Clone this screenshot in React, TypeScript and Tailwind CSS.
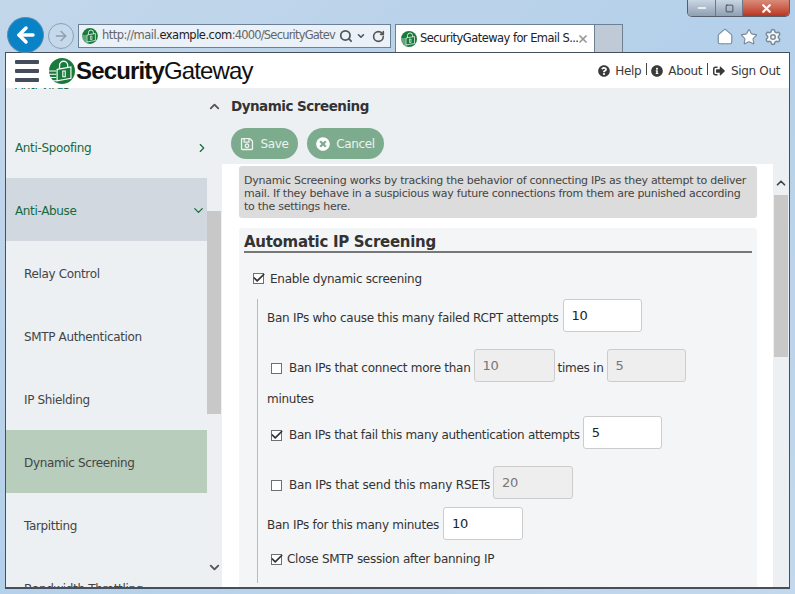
import { ArrowLeft, ArrowRight, ChevronDown, ChevronRight, ChevronUp, Home, RotateCw, Search, Settings, Star, X, Minus, Square, Check } from 'lucide-react';
import { FaInfoCircle, FaQuestionCircle, FaRegSave, FaSignOutAlt, FaTimesCircle } from 'react-icons/fa';
import type { ReactNode } from 'react';

const tahoma = "font-['DejaVu_Sans',sans-serif]";

function Logo({ size }: { size: number }) {
    return (
        <svg width={size} height={size} viewBox="0 0 32 32">
            <circle cx="16" cy="16" r="16" fill="#1a7a3c" />
            <path d="M13 13 V9 a5 5 0 0 1 10 0 V12" fill="none" stroke="#fff" strokeWidth="1.6" />
            <path d="M10 14 L27 11 V25 L10 28 Z" fill="#1a7a3c" stroke="#fff" strokeWidth="1.4" />
            <path d="M17 16 h3 v7 h-3 z" fill="none" stroke="#fff" strokeWidth="1.3" />
            <path d="M0 16 H9 M0 20 H9 M2 24 H9 M5 28 H11" stroke="#fff" strokeWidth="1.3" />
        </svg>
    );
}

function Box({ checked, className = '' }: { checked?: boolean; className?: string }) {
    return (
        <span className={`relative inline-block w-[11px] h-[11px] shrink-0 bg-white border border-[#707070] ${className}`}>
            {checked && <Check size={14} strokeWidth={3} className="absolute left-[-2px] top-[-3px] text-[#333]" />}
        </span>
    );
}

function Field({ value, width, disabled }: { value: string; width: string; disabled?: boolean }) {
    return (
        <span className={`inline-flex items-center h-[33px] pl-2 rounded-[3px] border border-[#ccc] text-[13px] ${width} ${disabled ? 'bg-[#eee] text-[#777]' : 'bg-white text-[#222]'}`}>
            {value}
        </span>
    );
}

// labels sit a little lower than the inputs beside them
function Label({ children, className = '' }: { children: ReactNode; className?: string }) {
    return <span className={`flex items-center whitespace-nowrap pt-[5px] ${className}`}>{children}</span>;
}

const navItems = [
    { label: 'Anti-Virus', cls: 'pl-[9px] text-[#166a3c]' },
    { label: 'Anti-Spoofing', cls: 'pl-[9px] text-[#166a3c]', icon: 'right' },
    { label: 'Anti-Abuse', cls: 'pl-[9px] text-[#166a3c] bg-[#d1d8df]', icon: 'down' },
    { label: 'Relay Control', cls: 'pl-[18px] text-[#444]' },
    { label: 'SMTP Authentication', cls: 'pl-[18px] text-[#444]' },
    { label: 'IP Shielding', cls: 'pl-[18px] text-[#444]' },
    { label: 'Dynamic Screening', cls: 'pl-[18px] text-[#444] bg-[#b8cdbc]' },
    { label: 'Tarpitting', cls: 'pl-[18px] text-[#444]' },
    { label: 'Bandwidth Throttling', cls: 'pl-[18px] text-[#444]' },
];

export default function App() {
    return (
        <div className={`relative w-[795px] h-[594px] overflow-hidden flex flex-col bg-gradient-to-br from-[#c3d7ea] via-[#b4d0ea] to-[#c2d8ec] text-[12px] tracking-[-0.35px] ${tahoma}`}>
            {/* Window buttons */}
            <div className="absolute top-0 left-[687px] w-[103px] h-[17px] flex rounded-b-[5px] border border-t-0 border-[#555e6b] overflow-hidden">
                <div className="w-[28px] flex items-center justify-center bg-gradient-to-b from-[#c9d6e3] to-[#8fa0b3] border-r border-[#6c7886]">
                    <Minus size={12} strokeWidth={3} className="text-white" />
                </div>
                <div className="w-[27px] flex items-center justify-center bg-gradient-to-b from-[#c9d6e3] to-[#8fa0b3] border-r border-[#6c7886]">
                    <Square size={9} strokeWidth={2} className="text-[#333]" />
                </div>
                <div className="flex-1 flex items-center justify-center bg-gradient-to-b from-[#d98a78] to-[#b9331f]">
                    <X size={13} strokeWidth={4} className="text-white" />
                </div>
            </div>

            {/* Browser chrome */}
            <div className="h-[52px] shrink-0 flex items-end pl-[7px] pr-[13px]">
                <div className="w-[37px] h-[36px] mb-[-1px] z-10 rounded-full bg-[#0a83c6] border border-[#5b8db0] flex items-center justify-center">
                    <ArrowLeft size={24} strokeWidth={3.5} className="text-white" />
                </div>
                <div className="w-[26px] h-[26px] ml-[4px] mb-[3px] rounded-full border border-[#8aa0b8] bg-[#c6d9ea] flex items-center justify-center">
                    <ArrowRight size={16} className="text-[#8b9cad]" />
                </div>
                <div className="w-[313px] h-[24px] ml-[4px] mb-[4px] flex items-center pl-[3px] pr-[5px] bg-[#eaf1f8] border border-[#6d8196] text-[11.5px] tracking-[-0.5px] text-[#666]">
                    <Logo size={16} />
                    <span className="ml-[4px] w-[235px] whitespace-nowrap">http://mail.<span className="text-[#222]">example.com</span><span className="tracking-[-0.8px]">:4000/SecurityGatev</span></span>
                    <Search size={14} strokeWidth={3} className="ml-[4px] text-[#555]" />
                    <ChevronDown size={10} strokeWidth={4} className="ml-[3px] text-[#555]" />
                    <RotateCw size={13} strokeWidth={3} className="ml-[6px] text-[#555]" />
                </div>
                <div className="w-[200px] h-[28px] ml-[4px] flex items-center pl-[5px] bg-white border border-b-0 border-[#6d8196] text-[11.5px] tracking-[-0.55px] text-[#222]">
                    <Logo size={16} />
                    <span className="ml-[3px] w-[157px] whitespace-nowrap">SecurityGateway for Email S...</span>
                    <X size={12} strokeWidth={3.5} className="text-[#999]" />
                </div>
                <div className="w-[28px] h-[28px] bg-[#bfcad6] border border-l-0 border-b-0 border-[#6d8196]" />
                <div className="ml-auto flex gap-[6px] mb-[6px]">
                    <Home size={18} strokeWidth={1.5} className="text-[#7a8a9a] fill-white" />
                    <Star size={18} strokeWidth={1.5} className="text-[#7a8a9a] fill-white" />
                    <Settings size={18} strokeWidth={2} className="text-[#7a8a9a] fill-[#f4f7fa]" />
                </div>
            </div>

            {/* Page */}
            <div className="mx-[5px] w-[785px] h-[537px] shrink-0 flex flex-col overflow-hidden bg-[#ecf0f3] border border-b-2 border-[#46505c]">
                <header className="h-[35px] shrink-0 z-10 flex items-center bg-white pl-[9px] pr-[9px]">
                    <div className="w-[24px] flex flex-col gap-[5px]">
                        <div className="h-[4px] bg-[#454d5c] rounded-[1px]" />
                        <div className="h-[4px] bg-[#454d5c] rounded-[1px]" />
                        <div className="h-[4px] bg-[#454d5c] rounded-[1px]" />
                    </div>
                    <div className="ml-[10px]"><Logo size={26} /></div>
                    <div className="ml-px font-['Liberation_Sans',sans-serif] text-[24px] tracking-[-0.85px] text-[#111]">
                        <span className="font-bold">Security</span>Gateway
                    </div>
                    <div className="ml-auto flex items-center text-[12px] text-[#3a3a3a]">
                        <FaQuestionCircle size={12} className="mr-[5px]" />Help
                        <span className="ml-[5px] mr-[4px] mb-[3px] h-[12px] w-px bg-[#444]" />
                        <FaInfoCircle size={12} className="mr-[5px]" />About
                        <span className="mx-[5px] mb-[3px] h-[12px] w-px bg-[#444]" />
                        <FaSignOutAlt size={12} className="mr-[6px]" />Sign Out
                    </div>
                </header>

                <div className="flex-1 min-h-0 flex">
                    {/* Sidebar */}
                    <nav className="w-[201px] shrink-0 overflow-hidden">
                        <div className="mt-[-36px]">
                            {navItems.map((item) => (
                                <div key={item.label} className={`h-[63px] pt-[2px] flex items-center justify-between pr-[2px] text-[12px] ${item.cls}`}>
                                    {item.label}
                                    {item.icon === 'right' && <ChevronRight size={14} strokeWidth={2} className="mr-[-4px] text-[#166a3c]" />}
                                    {item.icon === 'down' && <ChevronDown size={15} strokeWidth={2} className="mr-[-1px] text-[#166a3c]" />}
                                </div>
                            ))}
                        </div>
                    </nav>
                    <div className="w-[14px] shrink-0 flex flex-col items-center pt-[11px] pb-[12px]">
                        <ChevronUp size={15} strokeWidth={3} className="text-[#555]" />
                        <div className="mt-[97px] h-[203px] w-full bg-[#c8c8c8]" />
                        <ChevronDown size={15} strokeWidth={3} className="mt-auto text-[#555]" />
                    </div>

                    {/* Main */}
                    <main className="flex-1 min-w-0 flex flex-col">
                        <div className="pt-[8px] pl-[10px] text-[13.5px] tracking-[-0.5px] font-bold leading-[20px] text-[#333]">Dynamic Screening</div>
                        <div className="flex gap-[9px] pl-[10px] pt-[12px]">
                            <button className="h-[31px] w-[67px] flex items-center justify-center gap-[6px] rounded-full bg-[#7dab8d] text-[#edf3ee] text-[12px]">
                                <FaRegSave size={14} />Save
                            </button>
                            <button className="h-[31px] w-[77px] flex items-center justify-center gap-[6px] rounded-full bg-[#7dab8d] text-[#edf3ee] text-[12px]">
                                <FaTimesCircle size={14} className="text-white" />Cancel
                            </button>
                        </div>
                        <div className="flex-1 min-h-0 mt-[5px] flex overflow-hidden">
                            <div className="w-[551px] ml-px shrink-0 bg-white pl-[17px] pr-[16px] pt-[2px]">
                                <div className="h-[52px] px-[5px] pt-[8px] rounded-[3px] bg-[#dcdcdc] text-[11px] tracking-[-0.26px] leading-[13px] text-[#444]">
                                    Dynamic Screening works by tracking the behavior of connecting IPs as they attempt to deliver mail. If they behave in a suspicious way future connections from them are punished according to the settings here.
                                </div>
                                <section className="h-[400px] mt-[10px] pt-[3px] px-[5px] rounded-[3px] bg-[#f4f5f7] text-[#333] tracking-[-0.27px]">
                                    <h2 className="h-[22px] pt-px text-[15px] leading-[20px] font-bold border-b-2 border-[#777] tracking-[-0.3px]">Automatic IP Screening</h2>
                                    <div className="h-[41px] flex items-center gap-[6px] pl-[9px] pt-[10px]">
                                        <Box checked />Enable dynamic screening
                                    </div>
                                    <div className="ml-[13px] pl-[9px] h-[284px] border-l border-[#bbb]">
                                        <div className="flex items-center gap-[4px] h-[33px] mt-[5px]">
                                            <Label>Ban IPs who cause this many failed RCPT attempts</Label>
                                            <Field value="10" width="w-[79px]" />
                                        </div>
                                        <div className="flex items-center gap-[3px] h-[33px] mt-[17px]">
                                            <Label><Box className="ml-[4px] mr-[7px]" />Ban IPs that connect more than</Label>
                                            <Field value="10" width="w-[81px]" disabled />
                                            <Label>times in</Label>
                                            <Field value="5" width="w-[79px]" disabled />
                                        </div>
                                        <div className="h-[16px] mt-[9px] leading-[16px]">minutes</div>
                                        <div className="flex items-center gap-[3px] h-[33px] mt-[9px]">
                                            <Label className="tracking-[-0.31px]"><Box checked className="ml-[4px] mr-[7px]" />Ban IPs that fail this many authentication attempts</Label>
                                            <Field value="5" width="w-[79px]" />
                                        </div>
                                        <div className="flex items-center gap-[3px] h-[33px] mt-[17px]">
                                            <Label className="tracking-[-0.18px]"><Box className="ml-[4px] mr-[7px]" />Ban IPs that send this many RSETs</Label>
                                            <Field value="20" width="w-[80px]" disabled />
                                        </div>
                                        <div className="flex items-center gap-[4px] h-[33px] mt-[8px]">
                                            <span className="pt-[3px]">Ban IPs for this many minutes</span>
                                            <Field value="10" width="w-[80px]" />
                                        </div>
                                        <div className="flex items-center gap-[5px] h-[16px] mt-[11px]">
                                            <Box checked className="ml-[4px]" />Close SMTP session after banning IP
                                        </div>
                                    </div>
                                </section>
                            </div>
                            <div className="w-[14px] ml-[1px] shrink-0 flex flex-col items-center pt-[12px]">
                                <ChevronUp size={14} strokeWidth={3} className="text-[#444]" />
                                <div className="mt-[5px] h-[162px] w-full bg-[#c8c8c8]" />
                            </div>
                        </div>
                    </main>
                </div>
            </div>
        </div>
    );
}
